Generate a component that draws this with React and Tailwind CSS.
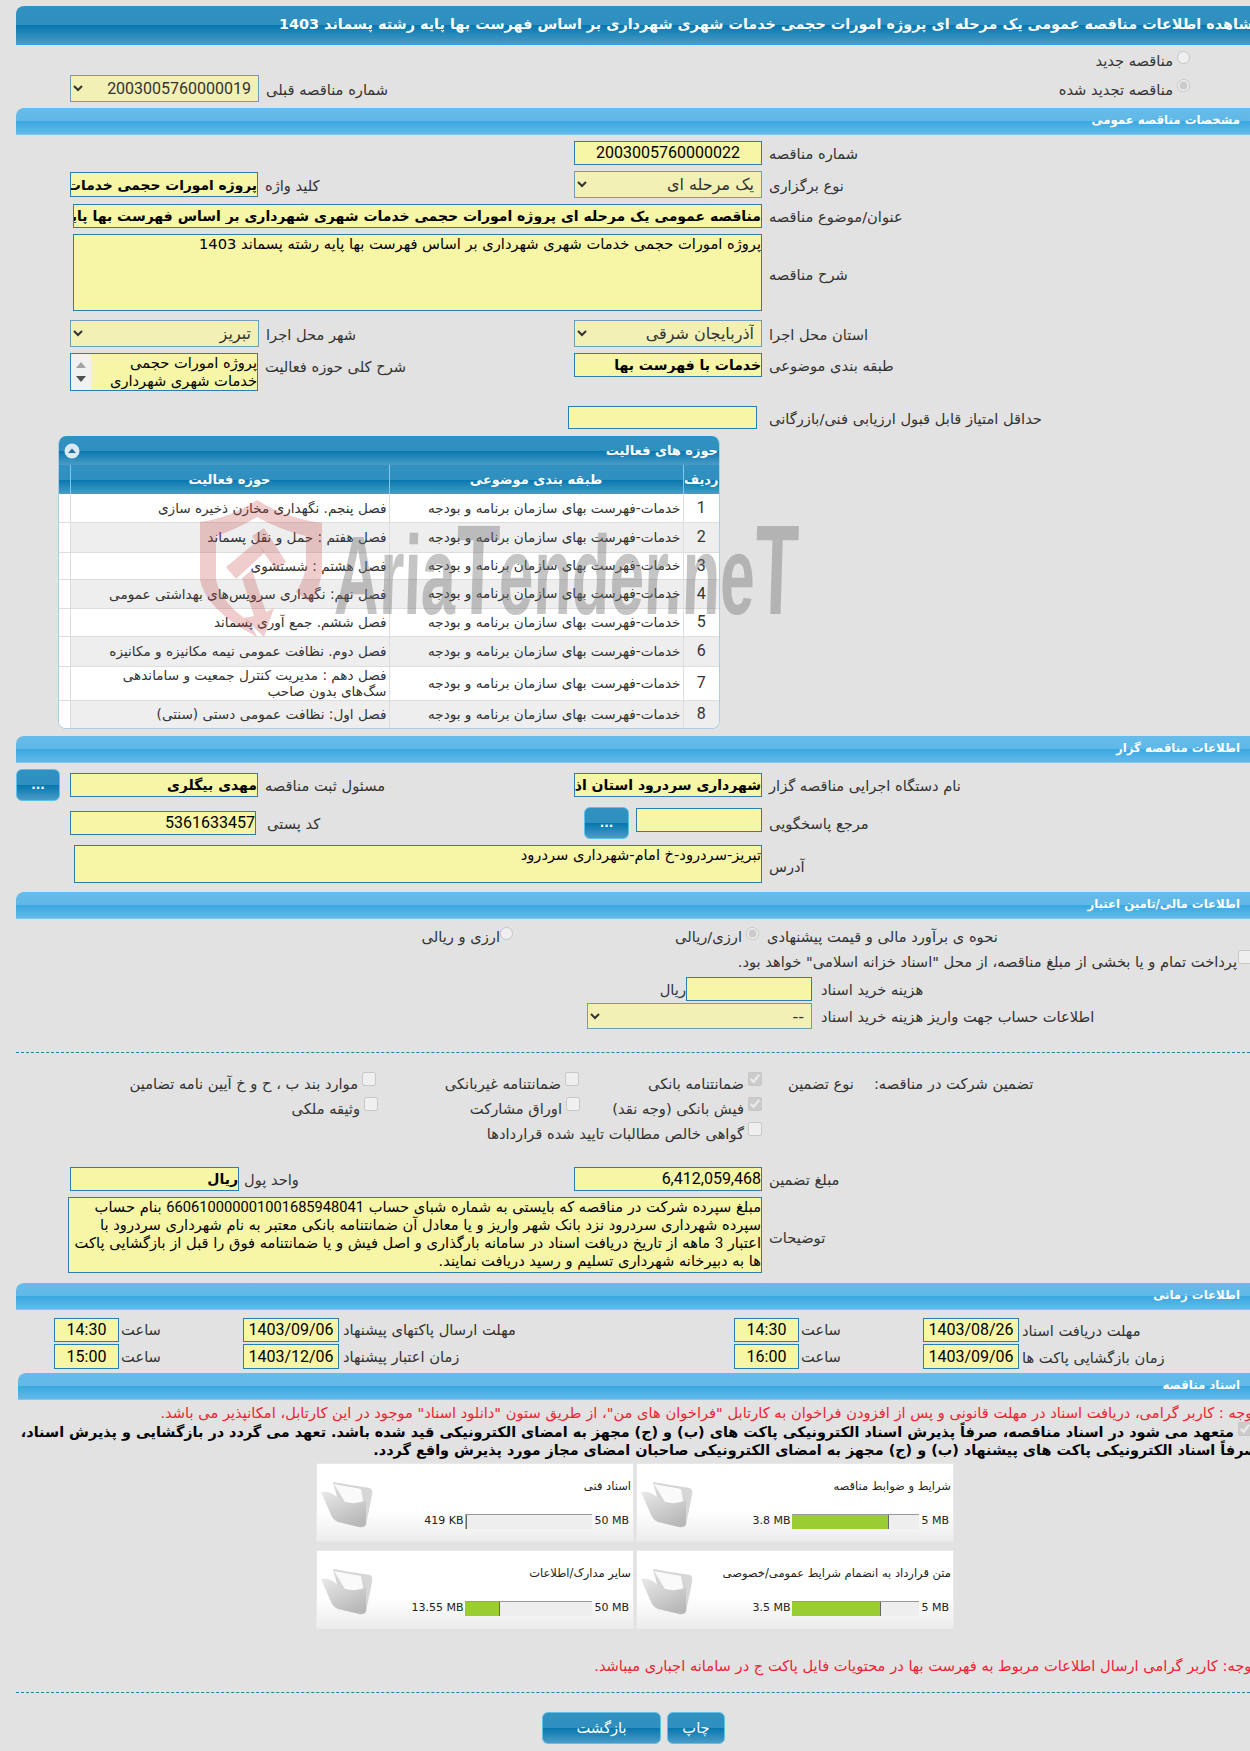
import React from "react";

const titleGrad = "bg-[linear-gradient(#3191c0_0%,#2f8fbe_50%,#0576ae_50%,#4a9cc6_100%)]";
const sectionGrad = "bg-[linear-gradient(#66bcea_0%,#5fb8e8_50%,#39a7e0_50%,#62baea_100%)]";
const inputCls = "bg-[#f7f5a6] border border-[#2a7fb0] text-black p-0 outline-none";
const selectCls = "bg-[#f2f0b4] border border-[#6d9db8] text-[#333] opacity-100";
const labelCls = "text-[14.67px] text-[#333] whitespace-nowrap pt-[2px]";
const numCls = "font-['Roboto',sans-serif] text-[16px]";
const boldCls = "text-[14px] font-bold";

const NOTE = 'توجه : کاربر گرامی، دریافت اسناد در مهلت قانونی و پس از افزودن فراخوان به کارتابل "فراخوان های من"، از طریق ستون "دانلود اسناد" موجود در این کارتابل، امکانپذیر می باشد.';

const activities = [
  ["فصل پنجم. نگهداری مخازن ذخیره سازی", "h-[28px]"],
  ["فصل هفتم : حمل و نقل پسماند", "h-[30px]"],
  ["فصل هشتم : شستشوی", "h-[27px]"],
  ["فصل نهم: نگهداری سرویس‌های بهداشتی عمومی", "h-[29px]"],
  ["فصل ششم. جمع آوری پسماند", "h-[28px]"],
  ["فصل دوم. نظافت عمومی نیمه مکانیزه و مکانیزه", "h-[30px]"],
  ["فصل دهم : مدیریت کنترل جمعیت و ساماندهی\nسگ‌های بدون صاحب", "h-[34px]"],
  ["فصل اول: نظافت عمومی دستی (سنتی)", "h-[28px]"],
];

const files = [
  { title: "شرایط و ضوابط مناقصه", used: "3.8 MB", max: "5 MB", pct: 76 },
  { title: "اسناد فنی", used: "419 KB", max: "50 MB", pct: 1 },
  { title: "متن قرارداد به انضمام شرایط عمومی/خصوصی", used: "3.5 MB", max: "5 MB", pct: 70 },
  { title: "سایر مدارک/اطلاعات", used: "13.55 MB", max: "50 MB", pct: 27 },
];

const Section = ({ title, className = "ml-4 mt-[6px]" }) => (
  <div className={`h-[27px] rounded-tl-lg border-b border-[#7cc8f0] flex items-center justify-end pr-[10px] ${sectionGrad} ${className}`}>
    <span dir="rtl" className="text-white text-[11.73px] font-bold">{title}</span>
  </div>
);

const Label = ({ children, className = "ml-[7px]" }) => (
  <span dir="rtl" className={`${labelCls} ${className}`}>{children}</span>
);

const Box = ({ value, className, center, bold, num, small }) => (
  <input
    readOnly
    dir={center ? "ltr" : "rtl"}
    value={value || ""}
    className={`${inputCls} ${center ? "text-center" : ""} ${small ? "text-[13.8px] font-bold" : num || center ? numCls : bold ? boldCls : "text-[14.67px]"} ${className}`}
  />
);

const Drop = ({ value, className, num }) => (
  <select disabled dir="rtl" defaultValue={value} className={`${selectCls} pr-[3px] ${num ? numCls : "text-[16px]"} ${className}`}>
    <option value={value}>{value}</option>
  </select>
);

const Dots = ({ className }) => (
  <button className={`rounded-md border border-[#5cc0ea] text-white text-[12px] font-bold ${titleGrad} ${className}`}>...</button>
);

const Guarantee = ({ label, checked, className }) => (
  <div className={`flex justify-end items-center ${className}`}>
    <span dir="rtl" className={labelCls}>{label}</span>
    <input type="checkbox" disabled defaultChecked={checked} className="ml-[4px] w-[14px] h-[14px] -mt-[8px]" />
  </div>
);

const Folder = () => (
  <svg width="52" height="46" viewBox="0 0 52 46" className="ml-[4px] mt-[18px] shrink-0">
    <defs>
      <linearGradient id="flap" x1="0" y1="0" x2="0.6" y2="1">
        <stop offset="0" stopColor="#e9e9e9" />
        <stop offset="1" stopColor="#b9b9b9" />
      </linearGradient>
    </defs>
    <path d="M12 0 L30 3 L49 6 Q52 8 51 13 L45 43 L20 30 Z" fill="#d6d6d6" />
    <path d="M13 2 L40 7 L43 24 L24 20 Z" fill="#fafafa" />
    <path d="M0 10 Q5 9 10 11 L24 20 Q36 23 45 18 L45 42 Q44 46 38 45 L17 40 Q12 38 10 33 Z" fill="url(#flap)" />
  </svg>
);

const FileCard = ({ title, used, max, pct }) => (
  <div className="h-[79px] flex bg-[linear-gradient(#ffffff_0%,#ffffff_60%,#ececec_100%)] border border-[#e8e8e8]">
    <Folder />
    <div className="flex-1 min-w-0 pr-[2px]">
      <div dir="rtl" className="text-[11.5px] text-[#222] mt-[14px] h-[17px] leading-[17px] whitespace-nowrap">{title}</div>
      <div className="flex justify-end items-center mt-[18px] mr-[2px] text-[11px] text-[#222]">
        <span>{used}</span>
        <div className="w-[127px] h-[15px] mx-[2px] bg-[#eeeeee] border-t border-[#999] flex">
          <div className="h-full bg-[#9acd32] border-r border-[#666]" style={{ width: `${pct}%` }} />
        </div>
        <span>{max}</span>
      </div>
    </div>
  </div>
);

const Watermark = () => (
  <div className="absolute left-[200px] top-[500px] w-[600px] h-[140px] pointer-events-none">
    <svg width="126" height="138" viewBox="0 0 126 138" className="absolute left-0 top-0">
      <path
        d="M57 0 Q85 18 122 23 L122 70 Q120 88 112 103 L96 92 Q104 80 106 66 L106 36 Q80 30 57 17 Q36 30 16 36 L16 80 Q22 104 50 122 L57 137 Q6 110 0 80 L0 22 Q30 18 57 0 Z"
        fill="#c84a4a"
        fillOpacity="0.28"
      />
      <path d="M26 67 L56 42 L65 52 L36 79 Z" fill="#c84a4a" fillOpacity="0.28" />
      <path d="M52 36 L64 28 L86 62 L76 70 Z" fill="#c84a4a" fillOpacity="0.28" />
      <path d="M42 78 L52 70 L66 112 L74 108 L64 137 L44 118 L54 116 Z" fill="#c84a4a" fillOpacity="0.28" />
    </svg>
    <div className="absolute left-[135px] top-[14px] origin-left whitespace-nowrap scale-x-[0.555] -skew-x-3 font-['Liberation_Sans',sans-serif] font-bold text-[112px] leading-[112px] text-[#6e6e6e]/40">
      Aria<span className="text-[128px]">T</span>ender.ne<span className="text-[128px]">T</span>
    </div>
  </div>
);

export default function App() {
  return (
    <div className="relative w-[1250px] h-[1751px] overflow-hidden bg-[#e2e2e2] pt-[6px] font-['DejaVu_Sans',sans-serif]">
      <div className={`ml-4 h-[39px] rounded-tl-lg border-b border-[#3a9fe0] overflow-hidden flex items-center justify-end ${titleGrad}`}>
        <span dir="rtl" className="text-white text-[14.4px] font-bold whitespace-nowrap -mr-[12px] shrink-0">
          مشاهده اطلاعات مناقصه عمومی یک مرحله ای پروژه امورات حجمی خدمات شهری شهرداری بر اساس فهرست بها پایه رشته پسماند 1403
        </span>
      </div>

      <div className="h-[24px] mt-[3px] flex items-center justify-end pr-[60px]">
        <Label className="">مناقصه جدید</Label>
        <input type="radio" disabled className="ml-[4px] -mt-[6px]" />
      </div>
      <div className="h-[27px] mt-[3px] flex items-center pl-[70px]">
        <Drop num value="2003005760000019" className="w-[189px] h-[27px]" />
        <Label>شماره مناقصه قبلی</Label>
        <div className="ml-auto mr-[60px] flex items-center">
          <Label className="">مناقصه تجدید شده</Label>
          <input type="radio" disabled defaultChecked className="ml-[4px] -mt-[6px]" />
        </div>
      </div>

      <Section title="مشخصات مناقصه عمومی" />

      <div className="flex items-center h-[24px] mt-[6px] pl-[574px]">
        <Box center value="2003005760000022" className="w-[188px] h-[24px]" />
        <Label>شماره مناقصه</Label>
      </div>
      <div className="flex items-center h-[27px] mt-[6px]">
        <div className="flex items-center w-[574px] pl-[70px]">
          <Box small value="پروژه امورات حجمی خدمات" className="w-[188px] h-[25px]" />
          <Label>کلید واژه</Label>
        </div>
        <Drop value="یک مرحله ای" className="w-[188px] h-[27px]" />
        <Label>نوع برگزاری</Label>
      </div>
      <div className="flex items-center h-[24px] mt-[6px] pl-[73px]">
        <Box bold value="مناقصه عمومی یک مرحله ای پروژه امورات حجمی خدمات شهری شهرداری بر اساس فهرست بها پایه رشته پسماند 1403" className="w-[689px] h-[24px]" />
        <Label>عنوان/موضوع مناقصه</Label>
      </div>
      <div className="flex items-center h-[77px] mt-[6px] pl-[73px]">
        <textarea readOnly dir="rtl" value="پروژه امورات حجمی خدمات شهری شهرداری بر اساس فهرست بها پایه رشته پسماند 1403" className={`${inputCls} text-[14.67px] w-[689px] h-[77px] resize-none leading-[18px]`} />
        <Label className="ml-[7px] mt-[3px]">شرح مناقصه</Label>
      </div>
      <div className="flex items-center h-[27px] mt-[9px]">
        <div className="flex items-center w-[574px] pl-[70px]">
          <Drop value="تبریز" className="w-[189px] h-[27px]" />
          <Label>شهر محل اجرا</Label>
        </div>
        <Drop value="آذربایجان شرقی" className="w-[188px] h-[27px]" />
        <Label>استان محل اجرا</Label>
      </div>
      <div className="flex h-[38px] mt-[6px]">
        <div className="flex items-start w-[574px] pl-[70px]">
          <div className="w-[188px] h-[38px] flex bg-[#f7f5a6] border border-[#2a7fb0] overflow-hidden">
            <div className="w-[20px] shrink-0 bg-[#f1f1f1] flex flex-col items-center justify-center gap-[8px]">
              <svg width="10" height="6" viewBox="0 0 10 6"><path d="M0 6 L5 0 L10 6 Z" fill="#a3a3a3" /></svg>
              <svg width="10" height="6" viewBox="0 0 10 6"><path d="M0 0 L10 0 L5 6 Z" fill="#505050" /></svg>
            </div>
            <div dir="rtl" className="flex-1 text-[14.67px] leading-[18px] text-black">پروژه امورات حجمی خدمات شهری شهرداری</div>
          </div>
          <Label className="ml-[7px] mt-[1px]">شرح کلی حوزه فعالیت</Label>
        </div>
        <div className="flex items-start">
          <Box bold value="خدمات با فهرست بها" className="w-[188px] h-[24px]" />
          <Label className="ml-[7px]">طبقه بندی موضوعی</Label>
        </div>
      </div>
      <div className="flex items-center h-[23px] mt-[15px] pl-[568px]">
        <Box className="w-[189px] h-[23px]" />
        <Label className="ml-[12px]">حداقل امتیاز قابل قبول ارزیابی فنی/بازرگانی</Label>
      </div>

      <div className="ml-[58px] w-[662px] h-[293px] mt-[7px] rounded-lg overflow-hidden bg-white border-x border-b border-[#a9cfe6]">
        <div className={`h-[29px] flex items-center justify-between pl-[4px] pr-[1px] ${titleGrad}`}>
          <svg width="16" height="16" viewBox="0 0 16 16" className="ml-[1px]">
            <circle cx="8" cy="8" r="7.5" fill="#dbe9f3" />
            <path d="M4 10 L8 5.5 L12 10 Z" fill="#1f6f9f" />
          </svg>
          <span dir="rtl" className="text-white text-[13px] font-bold">حوزه های فعالیت</span>
        </div>
        <table dir="rtl" className="w-[660px] table-fixed border-collapse text-[13.6px] text-[#333]">
          <colgroup>
            <col className="w-[36px]" />
            <col className="w-[294px]" />
            <col className="w-[319px]" />
            <col className="w-[11px]" />
          </colgroup>
          <thead>
            <tr className={`h-[29px] text-white text-[13px] ${titleGrad}`}>
              <th className="font-bold border-l border-[#7cc8f0] text-center">ردیف</th>
              <th className="font-bold border-l border-[#7cc8f0]">طبقه بندی موضوعی</th>
              <th className="font-bold border-l border-[#7cc8f0]">حوزه فعالیت</th>
              <th />
            </tr>
          </thead>
          <tbody>
            {activities.map(([name, height], i) => (
              <tr key={i} className={`${height} border-b border-[#dddddd] ${i % 2 ? "bg-[#eeeeee]" : "bg-white"}`}>
                <td className="text-center border-l border-[#dddddd] font-['Roboto',sans-serif] text-[16px]">{i + 1}</td>
                <td className="pr-[2px] border-l border-[#dddddd] whitespace-nowrap">خدمات-فهرست بهای سازمان برنامه و بودجه</td>
                <td className="pr-[2px] border-l border-[#dddddd] leading-[16px] whitespace-pre-line">{name}</td>
                <td className="bg-white" />
              </tr>
            ))}
          </tbody>
        </table>
      </div>

      <Section title="اطلاعات مناقصه گزار" className="ml-4 mt-[7px]" />

      <div className="flex items-center h-[32px] mt-[6px]">
        <div className="flex items-center w-[574px] pl-[16px]">
          <Dots className="w-[44px] h-[32px] mr-[10px]" />
          <Box bold value="مهدی بیگلری" className="w-[188px] h-[24px]" />
          <Label>مسئول ثبت مناقصه</Label>
        </div>
        <Box bold value="شهرداری سردرود استان اذربایجان شرقی" className="w-[188px] h-[24px]" />
        <Label>نام دستگاه اجرایی مناقصه گزار</Label>
      </div>
      <div className="flex items-center h-[32px] mt-[6px]">
        <div className="flex items-center w-[584px] pl-[70px]">
          <Box num value="5361633457" className="w-[186px] h-[24px]" />
          <Label className="ml-[11px]">کد پستی</Label>
        </div>
        <Dots className="w-[45px] h-[32px] mr-[7px]" />
        <Box className="w-[126px] h-[24px] -mt-[7px]" />
        <Label>مرجع پاسخگویی</Label>
      </div>
      <div className="flex items-center h-[38px] mt-[6px] pl-[74px]">
        <textarea readOnly dir="rtl" value="تبریز-سردرود-خ امام-شهرداری سردرود" className={`${inputCls} text-[14.67px] w-[688px] h-[38px] resize-none leading-[18px]`} />
        <Label className="ml-[7px] mt-[4px]">آدرس</Label>
      </div>

      <Section title="اطلاعات مالی/تامین اعتبار" className="ml-4 mt-[9px]" />

      <div className="flex items-center h-[20px] mt-[7px] pl-[420px]">
        <span dir="rtl" className={`${labelCls} w-[80px]`}>ارزی و ریالی</span>
        <input type="radio" disabled className="-mt-[6px]" />
        <span dir="rtl" className={`${labelCls} ml-[164px] w-[65px]`}>ارزی/ریالی</span>
        <input type="radio" disabled defaultChecked className="ml-[4px] -mt-[6px]" />
        <Label className="ml-[8px]">نحوه ی برآورد مالی و قیمت پیشنهادی</Label>
      </div>
      <div className="flex items-center justify-end h-[23px] mt-[3px] -mr-[16px]">
        <span dir="rtl" className={labelCls}>پرداخت تمام و یا بخشی از مبلغ مناقصه، از محل "اسناد خزانه اسلامی" خواهد بود.</span>
        <input type="checkbox" disabled className="ml-[1px] w-[14px] h-[14px] -mt-[8px] mr-[14px]" />
      </div>
      <div className="flex items-center h-[24px] mt-[5px] pl-[662px]">
        <span dir="rtl" className={`${labelCls} w-[24px]`}>ریال</span>
        <Box className="w-[126px] h-[24px]" />
        <Label className="ml-[9px]">هزینه خرید اسناد</Label>
      </div>
      <div className="flex items-center h-[26px] mt-[2px] pl-[587px]">
        <Drop value="--" className="w-[225px] h-[26px]" />
        <Label className="ml-[9px]">اطلاعات حساب جهت واریز هزینه خرید اسناد</Label>
      </div>

      <div className="ml-4 mt-[23px] border-t border-dashed border-[#2f7f9f]" />

      <div className="flex items-center h-[25px] mt-[17px] pl-[120px]">
        <Guarantee label="موارد بند ب ، ح و خ آیین نامه تضامین" className="w-[256px]" />
        <Guarantee label="ضمانتنامه غیربانکی" className="w-[203px]" />
        <Guarantee label="ضمانتنامه بانکی" checked className="w-[183px]" />
        <Label className="ml-[26px]">نوع تضمین</Label>
        <Label className="ml-[20px]">تضمین شرکت در مناقصه:</Label>
      </div>
      <div className="flex items-center h-[25px] pl-[120px]">
        <Guarantee label="وثیقه ملکی" className="w-[258px]" />
        <Guarantee label="اوراق مشارکت" className="w-[202px]" />
        <Guarantee label="فیش بانکی (وجه نقد)" checked className="w-[182px]" />
      </div>
      <div className="flex items-center h-[25px] pl-[462px]">
        <Guarantee label="گواهی خالص مطالبات تایید شده قراردادها" className="w-[300px]" />
      </div>

      <div className="flex items-center h-[24px] mt-[22px]">
        <div className="flex items-center w-[574px] pl-[70px]">
          <Box bold value="ریال" className="w-[169px] h-[24px]" />
          <Label className="ml-[5px]">واحد پول</Label>
        </div>
        <Box num value="6,412,059,468" className="w-[188px] h-[24px]" />
        <Label>مبلغ تضمین</Label>
      </div>
      <div className="flex items-center h-[76px] mt-[6px] pl-[68px]">
        <div dir="rtl" className={`${inputCls} text-[14.67px] w-[694px] h-[76px] leading-[18px] overflow-hidden`}>
          مبلغ سپرده شرکت در مناقصه که بایستی به شماره شبای حساب <span className="font-['Roboto',sans-serif]">660610000001001685948041</span> بنام حساب سپرده شهرداری سردرود نزد بانک شهر واریز و یا معادل آن ضمانتنامه بانکی معتبر به نام شهرداری سردرود با اعتبار <span className="font-['Roboto',sans-serif]">3</span> ماهه از تاریخ دریافت اسناد در سامانه بارگذاری و اصل فیش و یا ضمانتنامه فوق را قبل از بازگشایی پاکت ها به دبیرخانه شهرداری تسلیم و رسید دریافت نمایند.
        </div>
        <Label className="ml-[7px] mt-[4px]">توضیحات</Label>
      </div>

      <Section title="اطلاعات زمانی" className="ml-4 mt-[10px]" />

      <div className="flex items-center h-[24px] mt-[8px] pl-[54px]">
        <Box center value="14:30" className="w-[65px] h-[24px]" />
        <span className="w-[124px] pl-[2px]"><span dir="rtl" className={labelCls}>ساعت</span></span>
        <Box center value="1403/09/06" className="w-[96px] h-[24px]" />
        <span className="w-[395px] pl-[4px]"><span dir="rtl" className={labelCls}>مهلت ارسال پاکتهای پیشنهاد</span></span>
        <Box center value="14:30" className="w-[65px] h-[24px]" />
        <span className="w-[124px] pl-[2px]"><span dir="rtl" className={labelCls}>ساعت</span></span>
        <Box center value="1403/08/26" className="w-[96px] h-[24px]" />
        <Label className="ml-[3px]">مهلت دریافت اسناد</Label>
      </div>
      <div className="flex items-center h-[25px] mt-[2px] pl-[54px]">
        <Box center value="15:00" className="w-[65px] h-[25px]" />
        <span className="w-[124px] pl-[2px]"><span dir="rtl" className={labelCls}>ساعت</span></span>
        <Box center value="1403/12/06" className="w-[96px] h-[25px]" />
        <span className="w-[395px] pl-[4px]"><span dir="rtl" className={labelCls}>زمان اعتبار پیشنهاد</span></span>
        <Box center value="16:00" className="w-[65px] h-[25px]" />
        <span className="w-[124px] pl-[2px]"><span dir="rtl" className={labelCls}>ساعت</span></span>
        <Box center value="1403/09/06" className="w-[96px] h-[25px]" />
        <Label className="ml-[3px]">زمان بازگشایی پاکت ها</Label>
      </div>

      <Section title="اسناد مناقصه" className="ml-[18px] mt-[4px]" />

      <div className="flex justify-end h-[20px] mt-[3px] -mr-[7px]">
        <span dir="rtl" className="text-[14.67px] text-[#ee2233] whitespace-nowrap leading-[20px] shrink-0">{NOTE}</span>
      </div>
      <div className="flex flex-col items-end text-[14.4px] font-bold leading-[18px] text-black -mr-[8px]">
        <div className="flex items-center whitespace-nowrap">
          <span dir="rtl">متعهد می شود در اسناد مناقصه، صرفاً پذیرش اسناد الکترونیکی پاکت های (ب) و (ج) مجهز به امضای الکترونیکی قید شده باشد. تعهد می گردد در بازگشایی و پذیرش اسناد،</span>
          <input type="checkbox" disabled defaultChecked className="ml-[4px] mr-[6px] w-[14px] h-[14px] -mt-[6px]" />
        </div>
        <div dir="rtl" className="whitespace-nowrap">صرفاً اسناد الکترونیکی پاکت های پیشنهاد (ب) و (ج) مجهز به امضای الکترونیکی صاحبان امضای مجاز مورد پذیرش واقع گردد.</div>
      </div>

      <div className="ml-[316px] w-[638px] mt-[4px] grid grid-cols-2 gap-x-[2px] gap-y-[8px]">
        <FileCard {...files[1]} />
        <FileCard {...files[0]} />
        <FileCard {...files[3]} />
        <FileCard {...files[2]} />
      </div>

      <div className="flex justify-end h-[20px] mt-[27px] -mr-[6px]">
        <span dir="rtl" className="text-[14.67px] text-[#ee2233] whitespace-nowrap leading-[20px] shrink-0">توجه: کاربر گرامی ارسال اطلاعات مربوط به فهرست بها در محتویات فایل پاکت ج در سامانه اجباری میباشد.</span>
      </div>

      <div className="ml-4 mt-[16px] border-t border-dashed border-[#2f7f9f]" />

      <div className="flex mt-[19px] pl-[542px]">
        <button dir="rtl" className={`w-[119px] h-[32px] rounded-md border border-[#5cc0ea] text-white text-[14.67px] ${titleGrad}`}>بازگشت</button>
        <button dir="rtl" className={`w-[58px] h-[32px] ml-[6px] rounded-md border border-[#5cc0ea] text-white text-[14.67px] ${titleGrad}`}>چاپ</button>
      </div>

      <Watermark />
    </div>
  );
}
